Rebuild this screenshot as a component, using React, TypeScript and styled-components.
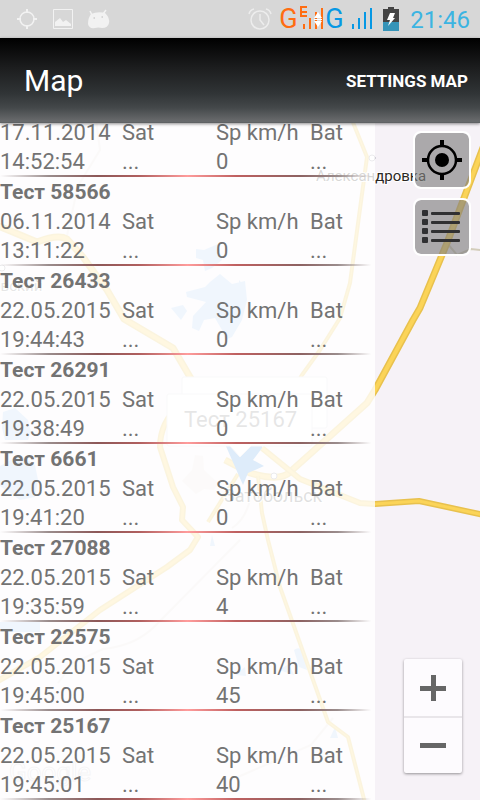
import React from 'react';
import styled, { createGlobalStyle } from 'styled-components';

const GlobalStyle = createGlobalStyle`
  * { box-sizing: border-box; }
  body { margin: 0; font-family: Roboto, "Liberation Sans", sans-serif; background: #f6f2f7; }
  h1, h2, ul, dl, dd { margin: 0; padding: 0; }
`;

const Screen = styled.div`
  display: flex;
  flex-direction: column;
  height: 100vh;
`;

const StatusBar = styled.div`
  display: flex;
  align-items: center;
  justify-content: space-between;
  flex: none;
  height: 38px;
  padding: 0 10px 0 17px;
  background: #d7d7d7;
`;

const StatusGroup = styled.div<{ $gap: number }>`
  display: flex;
  align-items: center;
  gap: ${(p) => p.$gap}px;
`;

const Carrier = styled.span<{ $color: string }>`
  width: 20px;
  font-size: 27px;
  line-height: 36px;
  color: ${(p) => p.$color};
`;

const Clock = styled.time`
  padding-top: 2px;
  font-size: 24px;
  line-height: 36px;
  color: #3cb4e2;
`;

const TitleBar = styled.header`
  display: flex;
  align-items: center;
  justify-content: space-between;
  flex: none;
  height: 85px;
  padding: 0 12px 0 24px;
  position: relative;
  z-index: 1;
  color: #fff;
  background: linear-gradient(#000 0%, #1c1d1e 35%, #303436 65%, #44484a 82%, #696b6d 98%, #5c5f61 100%);
  box-shadow: 0 1px 3px rgba(0, 0, 0, 0.45);
`;

const Title = styled.h1`
  font-size: 30px;
  font-weight: 400;
  line-height: 36px;
`;

const SettingsButton = styled.button`
  padding: 0;
  border: 0;
  background: none;
  color: inherit;
  font: 700 17px/24px Roboto, "Liberation Sans", sans-serif;
`;

const MapArea = styled.main`
  position: relative;
  display: grid;
  grid-template-columns: 25fr 7fr;
  grid-template-rows: minmax(0, 1fr);
  flex: 1;
  min-height: 0;
  overflow: hidden;
`;

const MapCanvas = styled.svg`
  position: absolute;
  inset: 0;
  width: 100%;
  height: 100%;
  font-family: Roboto, "Liberation Sans", sans-serif;
`;

const Panel = styled.ul`
  display: flex;
  flex-direction: column;
  justify-content: flex-end;
  position: relative;
  overflow: hidden;
  list-style: none;
  color: #737373;
  font-size: 22px;
  line-height: 29px;
  background: rgba(255, 255, 255, 0.82);
`;

const Vehicle = styled.li`
  flex: none;
  padding-top: 1px;
  &::after {
    content: "";
    display: block;
    height: 2px;
    margin-top: -1px;
    background: linear-gradient(90deg, rgba(110, 90, 90, 0) 0%, #9a8c8c 13%, #8d5858 26%, #b05f5f 37%, #ff9c9c 50%, #bf6060 63%, #8d6262 80%, #9a8c8c 90%, rgba(110, 90, 90, 0) 99%);
  }
`;

const VehicleName = styled.h2`
  font-size: 21px;
  font-weight: 700;
  line-height: 29px;
`;

const Readings = styled.dl`
  display: grid;
  grid-template-columns: 122fr 94fr 94fr 65fr;
  white-space: nowrap;
`;

const Tools = styled.div`
  display: flex;
  flex-direction: column;
  align-items: flex-end;
  gap: 9px;
  position: relative;
  padding: 8px 9px 27px;
`;

const ToolButton = styled.button`
  display: grid;
  place-items: center;
  width: 58px;
  height: 58px;
  padding: 0;
  border: 2px solid #fff;
  border-radius: 8px;
  background: rgba(128, 128, 128, 0.64);
  background-clip: padding-box;
`;

const ZoomBox = styled.div`
  display: flex;
  flex-direction: column;
  width: 58px;
  margin: auto 9px 0 0;
  border-radius: 2px;
  background: #fdfbfe;
  box-shadow: 0 1px 3px rgba(0, 0, 0, 0.4);
`;

const ZoomButton = styled.button`
  display: grid;
  place-items: center;
  height: 57px;
  padding: 0;
  border: 0;
  background: none;
  & + & { border-top: 2px solid #e9e6ea; }
`;

type Reading = { name?: string; date: string; time: string; speed: string };

const vehicles: Reading[] = [
  { date: '17.11.2014', time: '14:52:54', speed: '0' },
  { name: 'Тест 58566', date: '06.11.2014', time: '13:11:22', speed: '0' },
  { name: 'Тест 26433', date: '22.05.2015', time: '19:44:43', speed: '0' },
  { name: 'Тест 26291', date: '22.05.2015', time: '19:38:49', speed: '0' },
  { name: 'Тест 6661', date: '22.05.2015', time: '19:41:20', speed: '0' },
  { name: 'Тест 27088', date: '22.05.2015', time: '19:35:59', speed: '4' },
  { name: 'Тест 22575', date: '22.05.2015', time: '19:45:00', speed: '45' },
  { name: 'Тест 25167', date: '22.05.2015', time: '19:45:01', speed: '40' },
];

const roads = [
  { w: 7, d: 'M484 145L447 243L420 308L413 320L375 390L367 403L290 472Q280 482 250 473L225 460' },
  { w: 6, d: 'M484 515L419 501L375 504L360 503L300 479L262 448' },
  { w: 7, d: 'M-4 225L37 242Q58 234 67 239L83 257L107 290L124 319L173 348L190 377L212 410L245 470' },
  { w: 6, d: 'M180 405Q160 422 160 447L173 487L183 507L182 520L198 537L190 550L167 567L100 610L40 657L-4 682' },
  { w: 4, d: 'M352 120L367 157L350 283L340 318L320 350L302 375L262 440' },
  { w: 4, d: 'M258 476L262 513L268 540L280 587L328 722L348 737L365 803' },
  { w: 4, d: 'M208 522L238 474' },
];

const RegionMap = () => (
  <MapCanvas viewBox="0 123 480 677" preserveAspectRatio="xMidYMid slice" role="img" aria-label="Map">
    <rect y="123" width="480" height="677" fill="#f6f2f7" />
    <g fill="#abcdf5">
      <path d="M196 249l8 1 14-6 4 16-10 8-7 3-2-11-7-2zM186 292l19-5 5-5 10-8 12 10 13-3 2 19-5 20-10 17-7 3-3-10-7-12-11 2-5 11-7-3 1-12 13-14-19-5zM171 308l12-3 4 6-6 9z" />
      <path d="M3 412l12-4 13 12 3 12-3 8H5l-3-12zM0 466l20-11 15 10 3 15-3 17-15 3-20-14zM0 622h40v10H0z" />
      <path d="M294 650q7-5 11 5l2 15-8-3zM235 675l10-8 1 9zM279 670l10-6 5 11zM335 727l3 11h-8zM212 535l3 11h-5zM239 280q7 6 6 18l-6 5z" />
    </g>
    <path d="M195 455l8 1 1 14 14 13-4 7-10-1-8 5-14-13 10-11z" fill="#eee4e0" />
    <g fill="none" stroke="#e5dfdb" strokeWidth="2">
      <path d="M96 120l4 30-22 36-12 54M240 540l-85 86q-20 20-52 23l-30 14-15 20M238 777l73-32 22-27M250 500q-5 20-18 28" />
    </g>
    <path d="M447 243l10 12 14-6 10 1" fill="none" stroke="#d3cdbb" strokeWidth="2" />
    {roads.map((r) => (
      <g key={r.d} fill="none" strokeLinejoin="round">
        <path d={r.d} stroke="#e8c14e" strokeWidth={r.w} />
        <path d={r.d} stroke="#fbd458" strokeWidth={r.w - 3} />
      </g>
    ))}
    <g fill="#fff" stroke="#8f8f9d">
      <circle cx="372" cy="158" r="3" />
      <circle cx="274" cy="476" r="3" />
      <circle cx="2" cy="268" r="3" />
    </g>
    <g fill="#2a2723" stroke="#fff" strokeWidth="2" paintOrder="stroke" fontSize="15">
      <text x="316" y="181">Александровка</text>
      <text x="-8" y="291" fill="#777">овский</text>
      <text x="224" y="502" fontSize="18" fill="#555">Затобольск</text>
    </g>
    <path d="M225 444h37v4l-9 12 11 6-16 7-5 12z" fill="#4a94e2" />
    <g fill="#fff" stroke="#dddbe0">
      <rect x="182" y="377" width="145" height="51" rx="2" />
      <path d="M169 394h141q2 0 2 2v48q0 2-2 2h-59l-11 11-10-11h-61q-2 0-2-2v-48q0-2 2-2z" />
    </g>
    <text x="184" y="427" fontSize="22" fill="#777">Тест 25167</text>
    <text x="9" y="781" fontSize="26" fill="#fff" stroke="#c9c4ca" strokeWidth="1">Google</text>
  </MapCanvas>
);

const NoticeIcons = () => (
  <svg width="94" height="24" viewBox="0 0 94 24" fill="none" aria-hidden="true">
    <circle cx="10" cy="12" r="7" stroke="#f2f2f2" strokeWidth="1.5" />
    <path d="M10 2v4M10 18v4M0 12h4M16 12h4" stroke="#f2f2f2" strokeWidth="2" />
    <path d="M36.500 2.500h19v19h-19z" stroke="#f2f2f2" />
    <path d="M38 19v-4l5-4 3 4 3-2 5 4v2z" fill="#f2f2f2" />
    <path d="M73 4l2 4M89 3l-3 4" stroke="#f2f2f2" strokeWidth="1.500" />
    <path fillRule="evenodd" d="M74 7q7-3 14-1 5 5 4 10-1 5-7 5-4-1-7 0-6 1-7-4 0-6 3-10zM76.500 10v2h1.500v-2zM84.500 9v2h1.500v-2z" fill="#f2f2f2" />
  </svg>
);

const AlarmIcon = () => (
  <svg width="24" height="24" viewBox="0 0 24 24" fill="none" stroke="#ededed" strokeWidth="1.5" aria-hidden="true">
    <circle cx="12" cy="13" r="9" />
    <path d="M12 7v6l4 5M1 7q1-4 5-5M23 7q-1-4-5-5" />
  </svg>
);

const EdgeSignal = () => (
  <svg width="24" height="28" viewBox="0 0 24 28" aria-hidden="true">
    <g fill="#ff6d12">
      <path d="M0 1h7v2H2v3h5v2H2v2h5v2H0zM3 19h2v5H3zM9 13h2v11H9zM15 7h2v17h-2zM21 3h2v21h-2z" />
    </g>
    <path d="M18 7l4 6h-8zM18 22l-4-6h8zM14 14h8v1h-8z" fill="#fff" />
  </svg>
);

const Signal = () => (
  <svg width="20" height="28" viewBox="0 0 20 28" fill="#0798e4" aria-hidden="true">
    <path d="M0 19h2v5H0zM6 13h2v11H6zM12 7h2v17h-2zM18 3h2v21h-2z" />
  </svg>
);

const Battery = () => (
  <svg width="16" height="24" viewBox="0 0 16 24" aria-hidden="true">
    <path d="M5 0h6v2h5v13H0V2h5z" fill="#444" />
    <path d="M0 15h16v9H0z" fill="#3694b8" />
    <path d="M7 6h5l-2 5h2l-7 8 2-6H4z" fill="#fff" />
  </svg>
);

const TargetIcon = () => (
  <svg width="40" height="40" viewBox="0 0 40 40" fill="none" stroke="#000" aria-hidden="true">
    <circle cx="20" cy="20" r="14" strokeWidth="2.500" />
    <circle cx="20" cy="20" r="7" fill="#000" stroke="none" />
    <path d="M20 0v7M20 33v7M0 20h7M33 20h7" strokeWidth="4" />
  </svg>
);

const ListIcon = () => (
  <svg width="40" height="36" viewBox="0 0 40 36" aria-hidden="true">
    {[4, 13, 22, 31].map((y) => (
      <g key={y} fill="#303032">
        <rect x="0" y={y - 3} width="6" height="6" rx="1" />
        <rect x="9" y={y - 1} width="29" height="3" rx="1" />
      </g>
    ))}
  </svg>
);

const VehicleRow = ({ item }: { item: Reading }) => (
  <Vehicle>
    {item.name && <VehicleName>{item.name}</VehicleName>}
    <Readings>
      <div><dt>{item.date}</dt><dd>{item.time}</dd></div>
      <div><dt>Sat</dt><dd>...</dd></div>
      <div><dt>Sp km/h</dt><dd>{item.speed}</dd></div>
      <div><dt>Bat</dt><dd>...</dd></div>
    </Readings>
  </Vehicle>
);

export default function App() {
  return (
    <Screen>
      <GlobalStyle />
      <StatusBar>
        <NoticeIcons />
        <StatusGroup $gap={11}>
          <StatusGroup $gap={7}>
            <AlarmIcon />
            <StatusGroup $gap={1}>
              <Carrier $color="#ff6d12">G</Carrier>
              <EdgeSignal />
              <Carrier $color="#0798e4">G</Carrier>
            </StatusGroup>
            <Signal />
          </StatusGroup>
          <Battery />
          <Clock>21:46</Clock>
        </StatusGroup>
      </StatusBar>
      <TitleBar>
        <Title>Map</Title>
        <SettingsButton type="button">SETTINGS MAP</SettingsButton>
      </TitleBar>
      <MapArea>
        <RegionMap />
        <Panel>
          {vehicles.map((item) => <VehicleRow key={item.name ?? item.date} item={item} />)}
        </Panel>
        <Tools>
          <ToolButton type="button" aria-label="My location"><TargetIcon /></ToolButton>
          <ToolButton type="button" aria-label="Vehicle list"><ListIcon /></ToolButton>
          <ZoomBox>
            <ZoomButton type="button" aria-label="Zoom in">
              <svg width="26" height="26" viewBox="0 0 26 26" fill="#666"><path d="M11 0h5v11h10v5H16v10h-5V16H0v-5h11z" /></svg>
            </ZoomButton>
            <ZoomButton type="button" aria-label="Zoom out">
              <svg width="26" height="6" viewBox="0 0 26 6" fill="#666"><path d="M0 0h26v5H0z" /></svg>
            </ZoomButton>
          </ZoomBox>
        </Tools>
      </MapArea>
    </Screen>
  );
}
